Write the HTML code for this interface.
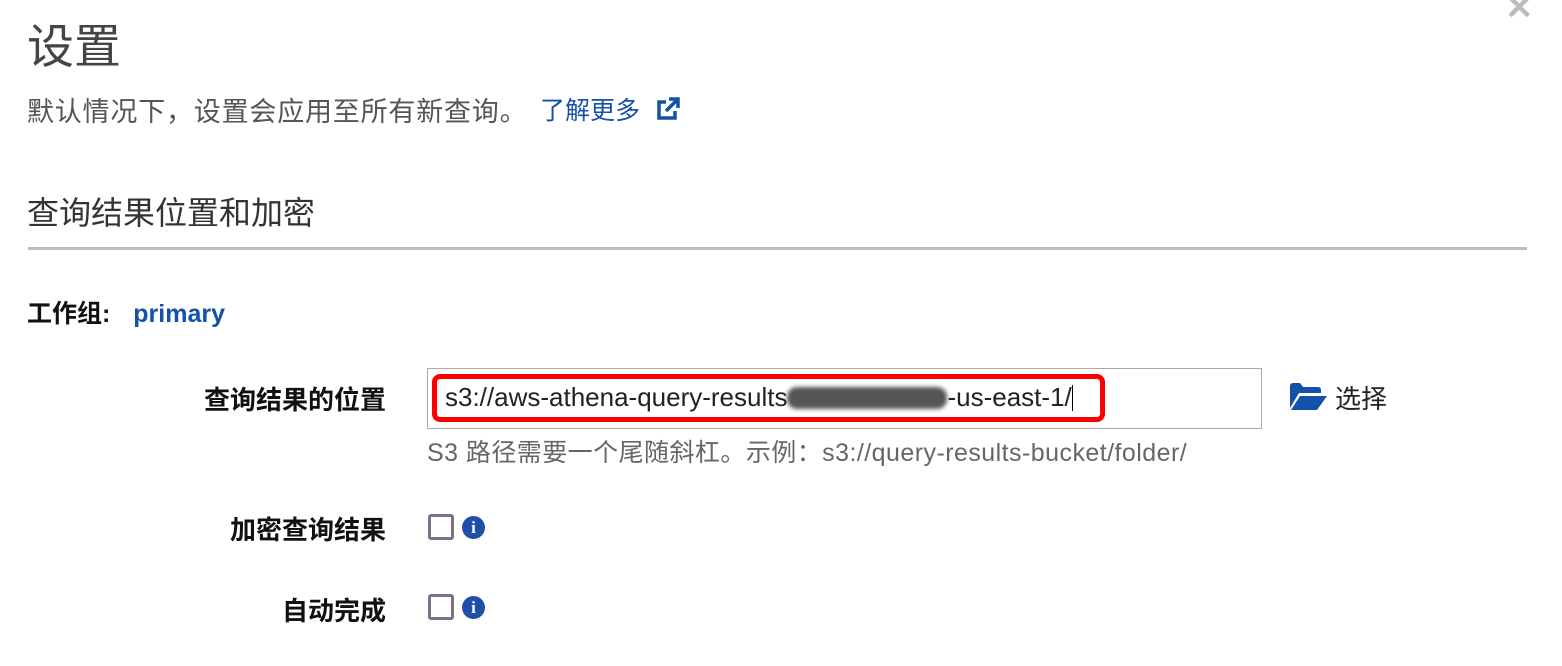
<!DOCTYPE html>
<html><head><meta charset="utf-8"><style>
body{margin:0;width:1562px;height:666px;background:#fff;position:relative;overflow:hidden;font-family:"Liberation Sans","Noto Sans CJK SC",sans-serif;color:#222}
.a{position:absolute;white-space:nowrap}
.lbl{font-weight:bold;font-size:26px;color:#111;text-align:right;width:360px;left:26px}
.cb{position:absolute;width:20px;height:20px;border:3px solid #777485;border-radius:3px;left:428px}
.info{position:absolute;left:462px;width:23px;height:23px;border-radius:50%;background:#1f4ea8;color:#fff;font:bold 17px "Liberation Serif",serif;text-align:center;line-height:23px}
</style></head><body>
<div class="a" style="left:1505px;top:-12px;font-size:34px;color:#bbb;font-weight:bold">✕</div>
<div class="a" style="left:27px;top:8px;font-size:47px;color:#444">设置</div>
<div class="a" style="left:27px;top:90px;font-size:27px;color:#555;letter-spacing:0.8px">默认情况下，设置会应用至所有新查询。</div>
<div class="a" style="left:540px;top:91px;font-size:25px;color:#1451a8">了解更多<svg width="28" height="26" viewBox="0 0 28 26" style="vertical-align:-3px;margin-left:14px"><path d="M12 6H5v16h16v-7" fill="none" stroke="#1451a8" stroke-width="3.5"/><path d="M15 3h9v9M24 3L12 15" fill="none" stroke="#1451a8" stroke-width="3.5"/></svg></div>
<div class="a" style="left:27px;top:188px;font-size:32px;color:#333">查询结果位置和加密</div>
<div class="a" style="left:28px;top:247px;width:1499px;height:3px;background:#bdbdbd"></div>
<div class="a" style="left:27px;top:294px;font-size:25px;font-weight:bold;color:#111">工作组: <span style="color:#1451a8;margin-left:16px">primary</span></div>
<div class="a lbl" style="top:380px">查询结果的位置</div>
<div class="a" style="left:427px;top:368px;width:833px;height:59px;border:1px solid #aaa"></div>
<div class="a" style="left:432px;top:374px;width:663px;height:38px;border:5px solid #f00;border-radius:8px"></div>
<div class="a" style="left:445px;top:382px;font-size:26px;color:#222">s3://aws-athena-query-results<span style="display:inline-block;width:160px;height:22px;background:#555;filter:blur(2px);vertical-align:-3px;border-radius:10px"></span>-us-east-1/<span style="display:inline-block;width:1px;height:26px;background:#000;vertical-align:-5px"></span></div>
<svg class="a" style="left:1290px;top:382px" width="37" height="29" viewBox="0 0 37 29"><path d="M0 4Q0 1 3 1h7l3 4h15q3 0 3 3v3H9L0 26Z" fill="#1451a8"/><path d="M10 14h27L27 28H1Z" fill="#1451a8"/></svg>
<div class="a" style="left:1335px;top:379px;font-size:26px;color:#222">选择</div>
<div class="a" style="left:427px;top:433px;font-size:25px;color:#666;letter-spacing:0.45px">S3 路径需要一个尾随斜杠。示例：s3://query-results-bucket/folder/</div>
<div class="a lbl" style="top:510px">加密查询结果</div>
<div class="cb" style="top:514px"></div><div class="info" style="top:516px">i</div>
<div class="a lbl" style="top:591px">自动完成</div>
<div class="cb" style="top:594px"></div><div class="info" style="top:596px">i</div>
</body></html>
